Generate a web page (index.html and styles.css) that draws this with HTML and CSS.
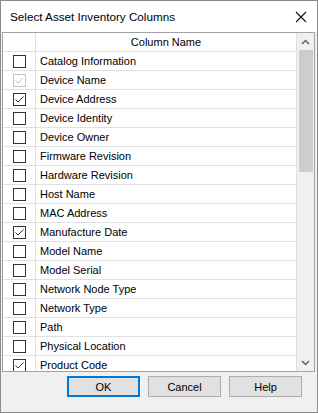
FILE: index.html
```html
<!DOCTYPE html>
<html lang="en">
<head>
  <meta charset="UTF-8" />
  <title>Select Asset Inventory Columns</title>
  <link rel="stylesheet" href="styles.css">
</head>
<body>
  <div class="dialog">
    <div class="titlebar">
      <span class="title">Select Asset Inventory Columns</span>
      <span class="close">
        <svg width="12" height="12" viewBox="0 0 12 12"><path d="M1 1L11 11M11 1L1 11" stroke="#111" stroke-width="1.1" fill="none"/></svg>
      </span>
    </div>

    <div class="grid">
      <div class="table">
        <div class="row head">
          <div class="cell-check"></div>
          <div class="cell-name center">Column Name</div>
        </div>
        <div class="row"><div class="cell-check"><span class="box"></span></div><div class="cell-name">Catalog Information</div></div>
        <div class="row"><div class="cell-check"><span class="box disabled"><svg width="11" height="11" viewBox="0 0 11 11"><path d="M1.5 5.5L4 8L9.5 2.5" stroke="#c4c4c4" stroke-width="1" fill="none"/></svg></span></div><div class="cell-name">Device Name</div></div>
        <div class="row"><div class="cell-check"><span class="box"><svg width="11" height="11" viewBox="0 0 11 11"><path d="M1.5 5.5L4 8L9.5 2.5" stroke="#333" stroke-width="1" fill="none"/></svg></span></div><div class="cell-name">Device Address</div></div>
        <div class="row"><div class="cell-check"><span class="box"></span></div><div class="cell-name">Device Identity</div></div>
        <div class="row"><div class="cell-check"><span class="box"></span></div><div class="cell-name">Device Owner</div></div>
        <div class="row"><div class="cell-check"><span class="box"></span></div><div class="cell-name">Firmware Revision</div></div>
        <div class="row"><div class="cell-check"><span class="box"></span></div><div class="cell-name">Hardware Revision</div></div>
        <div class="row"><div class="cell-check"><span class="box"></span></div><div class="cell-name">Host Name</div></div>
        <div class="row"><div class="cell-check"><span class="box"></span></div><div class="cell-name">MAC Address</div></div>
        <div class="row"><div class="cell-check"><span class="box"><svg width="11" height="11" viewBox="0 0 11 11"><path d="M1.5 5.5L4 8L9.5 2.5" stroke="#333" stroke-width="1" fill="none"/></svg></span></div><div class="cell-name">Manufacture Date</div></div>
        <div class="row"><div class="cell-check"><span class="box"></span></div><div class="cell-name">Model Name</div></div>
        <div class="row"><div class="cell-check"><span class="box"></span></div><div class="cell-name">Model Serial</div></div>
        <div class="row"><div class="cell-check"><span class="box"></span></div><div class="cell-name">Network Node Type</div></div>
        <div class="row"><div class="cell-check"><span class="box"></span></div><div class="cell-name">Network Type</div></div>
        <div class="row"><div class="cell-check"><span class="box"></span></div><div class="cell-name">Path</div></div>
        <div class="row"><div class="cell-check"><span class="box"></span></div><div class="cell-name">Physical Location</div></div>
        <div class="row"><div class="cell-check"><span class="box"><svg width="11" height="11" viewBox="0 0 11 11"><path d="M1.5 5.5L4 8L9.5 2.5" stroke="#333" stroke-width="1" fill="none"/></svg></span></div><div class="cell-name">Product Code</div></div>
      </div>

      <div class="scroll">
        <div class="arrow">
          <svg width="9" height="6" viewBox="0 0 9 6"><path d="M1 5L4.5 1.5L8 5" stroke="#606060" stroke-width="1.5" fill="none"/></svg>
        </div>
        <div class="thumb"></div>
        <div class="track"></div>
        <div class="arrow">
          <svg width="9" height="6" viewBox="0 0 9 6"><path d="M1 1L4.5 4.5L8 1" stroke="#606060" stroke-width="1.5" fill="none"/></svg>
        </div>
      </div>
    </div>

    <div class="buttons">
      <button class="btn default">OK</button>
      <button class="btn">Cancel</button>
      <button class="btn">Help</button>
    </div>
  </div>
</body>
</html>
```

FILE: styles.css
```css
* {
  margin: 0;
  padding: 0;
  box-sizing: border-box;
}

body {
  width: 318px;
  height: 413px;
  font-family: "Liberation Sans", Arial, sans-serif;
  background: #fff;
  overflow: hidden;
}

.dialog {
  width: 318px;
  height: 413px;
  border: 1px solid #8a8a8a;
  background: #f0f0f0;
  display: flex;
  flex-direction: column;
}

.titlebar {
  height: 31px;
  flex-shrink: 0;
  background: #fff;
  display: flex;
  align-items: center;
  justify-content: space-between;
  padding-left: 9px;
  font-size: 11.7px;
  color: #000;
}

.close {
  width: 32px;
  height: 31px;
  display: flex;
  align-items: center;
  justify-content: center;
}

.grid {
  margin-left: 1px;
  width: 313px;
  height: 340px;
  flex-shrink: 0;
  border: 1px solid #a0a4aa;
  background: #fff;
  display: flex;
  overflow: hidden;
}

.table {
  width: 294px;
  display: flex;
  flex-direction: column;
  overflow: hidden;
}

.row {
  height: 19px;
  flex-shrink: 0;
  display: flex;
  border-bottom: 1px solid #e0e0e0;
  font-size: 11px;
  color: #000;
}

.row.head {
  height: 19px;
}

.cell-check {
  width: 33px;
  border-right: 1px solid #e0e0e0;
  display: flex;
  align-items: center;
  justify-content: center;
}

.cell-name {
  width: 261px;
  border-right: 1px solid #e0e0e0;
  padding-left: 4px;
  display: flex;
  align-items: center;
  white-space: nowrap;
}

.cell-name.center {
  justify-content: center;
  padding-left: 0;
}

.box {
  width: 13px;
  height: 13px;
  border: 1px solid #333;
  background: #fff;
  display: flex;
  align-items: center;
  justify-content: center;
}

.box.disabled {
  border-color: #c4c4c4;
}

.scroll {
  width: 17px;
  background: #f0f0f0;
  display: flex;
  flex-direction: column;
  align-items: center;
}

.arrow {
  width: 17px;
  height: 17px;
  flex-shrink: 0;
  display: flex;
  align-items: center;
  justify-content: center;
}

.thumb {
  width: 14px;
  height: 122px;
  flex-shrink: 0;
  background: #cdcdcd;
}

.track {
  flex: 1;
}

.buttons {
  display: flex;
  gap: 8px;
  padding-left: 66px;
  margin-top: 4px;
}

.btn {
  width: 73px;
  height: 21px;
  border: 1px solid #adadad;
  background: #e1e1e1;
  font-family: "Liberation Sans", Arial, sans-serif;
  font-size: 11px;
  color: #000;
}

.btn.default {
  border: 2px solid #0078d7;
}
```
